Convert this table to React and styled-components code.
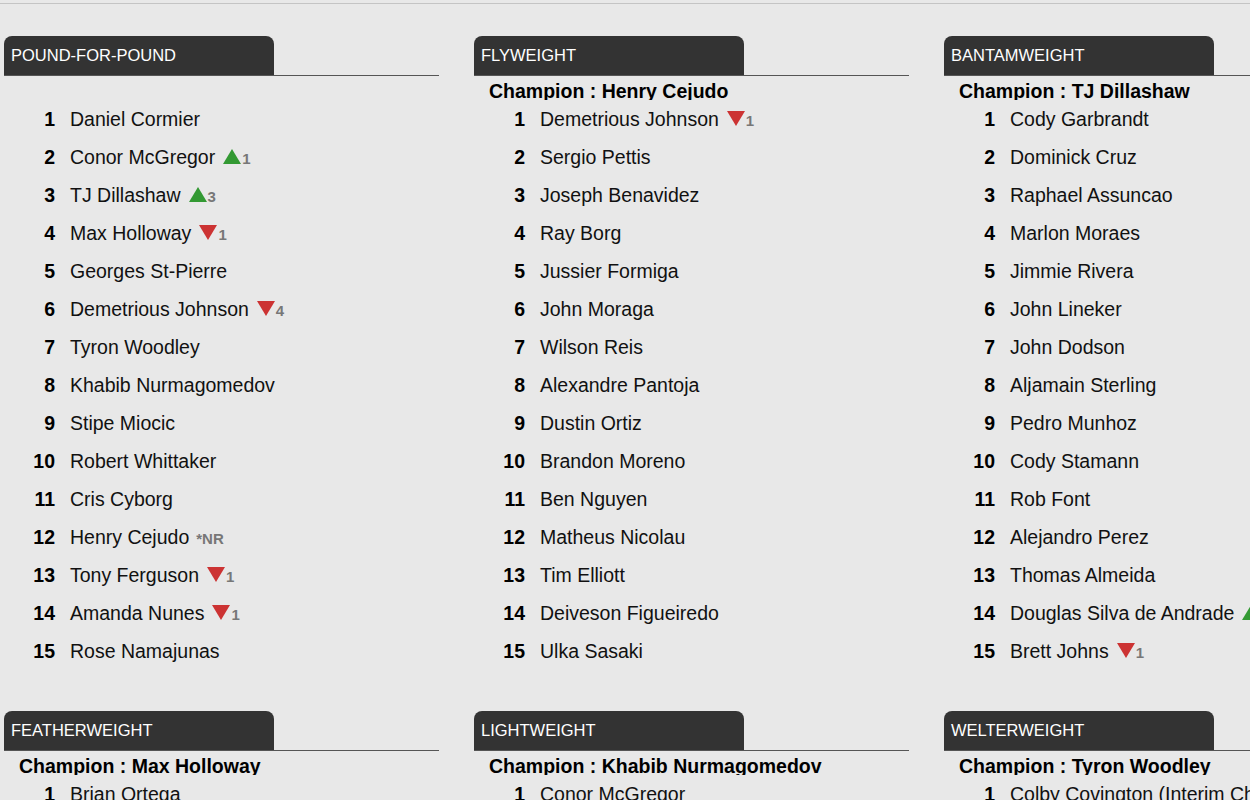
import styled, { createGlobalStyle } from "styled-components";

const GlobalStyle = createGlobalStyle`
    html, body {
        margin: 0;
        padding: 0;
        background: #e8e8e8;
        overflow: hidden;
        font-family: "Liberation Sans", Arial, sans-serif;
    }
`;

const divisions = [
    {
        title: "POUND-FOR-POUND",
        champion: null,
        fighters: [
            ["Daniel Cormier"],
            ["Conor McGregor", "up", 1],
            ["TJ Dillashaw", "up", 3],
            ["Max Holloway", "down", 1],
            ["Georges St-Pierre"],
            ["Demetrious Johnson", "down", 4],
            ["Tyron Woodley"],
            ["Khabib Nurmagomedov"],
            ["Stipe Miocic"],
            ["Robert Whittaker"],
            ["Cris Cyborg"],
            ["Henry Cejudo", "nr"],
            ["Tony Ferguson", "down", 1],
            ["Amanda Nunes", "down", 1],
            ["Rose Namajunas"],
        ],
    },
    {
        title: "FLYWEIGHT",
        champion: "Henry Cejudo",
        fighters: [
            ["Demetrious Johnson", "down", 1],
            ["Sergio Pettis"],
            ["Joseph Benavidez"],
            ["Ray Borg"],
            ["Jussier Formiga"],
            ["John Moraga"],
            ["Wilson Reis"],
            ["Alexandre Pantoja"],
            ["Dustin Ortiz"],
            ["Brandon Moreno"],
            ["Ben Nguyen"],
            ["Matheus Nicolau"],
            ["Tim Elliott"],
            ["Deiveson Figueiredo"],
            ["Ulka Sasaki"],
        ],
    },
    {
        title: "BANTAMWEIGHT",
        champion: "TJ Dillashaw",
        fighters: [
            ["Cody Garbrandt"],
            ["Dominick Cruz"],
            ["Raphael Assuncao"],
            ["Marlon Moraes"],
            ["Jimmie Rivera"],
            ["John Lineker"],
            ["John Dodson"],
            ["Aljamain Sterling"],
            ["Pedro Munhoz"],
            ["Cody Stamann"],
            ["Rob Font"],
            ["Alejandro Perez"],
            ["Thomas Almeida"],
            ["Douglas Silva de Andrade", "up", 1],
            ["Brett Johns", "down", 1],
        ],
    },
    {
        title: "FEATHERWEIGHT",
        champion: "Max Holloway",
        fighters: [
            ["Brian Ortega"],
            ["Frankie Edgar"],
            ["Jose Aldo"],
            ["Cub Swanson"],
            ["Josh Emmett"],
        ],
    },
    {
        title: "LIGHTWEIGHT",
        champion: "Khabib Nurmagomedov",
        fighters: [
            ["Conor McGregor"],
            ["Tony Ferguson"],
            ["Dustin Poirier"],
            ["Eddie Alvarez"],
            ["Kevin Lee"],
        ],
    },
    {
        title: "WELTERWEIGHT",
        champion: "Tyron Woodley",
        fighters: [
            ["Colby Covington (Interim Champion)"],
            ["Rafael dos Anjos"],
            ["Stephen Thompson"],
            ["Robbie Lawler"],
            ["Demian Maia"],
        ],
    },
];

function Arrow({ dir }) {
    const up = dir === "up";
    return (
        <ArrowIcon width="18" height="15" viewBox="0 0 18 15">
            {up ? (
                <polygon points="9,0 18,15 0,15" fill="#339933" />
            ) : (
                <polygon points="0,0 18,0 9,15" fill="#cc3333" />
            )}
        </ArrowIcon>
    );
}

function Division({ title, champion, fighters }) {
    return (
        <Section>
            <TabBar>
                <Tab>{title}</Tab>
            </TabBar>
            <Champion>{champion ? `Champion : ${champion}` : ""}</Champion>
            <RankList>
                {fighters.map(([name, move, amount], i) => (
                    <Row key={name}>
                        <Rank>{i + 1}</Rank>
                        <Name>{name}</Name>
                        {move === "nr" && <Change $nr>*NR</Change>}
                        {(move === "up" || move === "down") && (
                            <>
                                <Arrow dir={move} />
                                <Change>{amount}</Change>
                            </>
                        )}
                    </Row>
                ))}
            </RankList>
        </Section>
    );
}

export default function App() {
    return (
        <>
            <GlobalStyle />
            <TopRule />
            <Grid>
                {divisions.map((d) => (
                    <Division key={d.title} {...d} />
                ))}
            </Grid>
        </>
    );
}

const TopRule = styled.div`
    height: 3px;
    border-bottom: 1px solid #c4c4c4;
`;

const Grid = styled.main`
    display: grid;
    grid-template-columns: repeat(3, 435px);
    column-gap: 35px;
    row-gap: 41px;
    padding: 32px 0 0 4px;
    width: max-content;
`;

const Section = styled.section`
    display: flex;
    flex-direction: column;
`;

const TabBar = styled.div`
    height: 39px;
    border-bottom: 1px solid #555;
`;

const Tab = styled.div`
    width: 263px;
    height: 39px;
    padding-left: 7px;
    background: #333333;
    border-radius: 8px 8px 0 0;
    color: #fff;
    font-size: 16.5px;
    line-height: 39px;
`;

const Champion = styled.div`
    height: 24px;
    padding-left: 15px;
    overflow: hidden;
    font-size: 19.5px;
    font-weight: bold;
    line-height: 31px;
    color: #000;
`;

const RankList = styled.ol`
    list-style: none;
    margin: 0;
    padding: 0;
`;

const Row = styled.li`
    display: flex;
    align-items: baseline;
    height: 38px;
    line-height: 38px;
    font-size: 19.5px;
    white-space: nowrap;
    color: #111;
`;

const Rank = styled.span`
    width: 51px;
    flex: none;
    text-align: right;
    font-weight: bold;
    color: #000;
`;

const Name = styled.span`
    margin-left: 15px;
`;

const ArrowIcon = styled.svg`
    flex: none;
    margin-left: 8px;
    align-self: baseline;
`;

const Change = styled.span`
    margin-left: ${(p) => (p.$nr ? "7px" : "1px")};
    font-size: 15px;
    font-weight: bold;
    color: #777;
`;
